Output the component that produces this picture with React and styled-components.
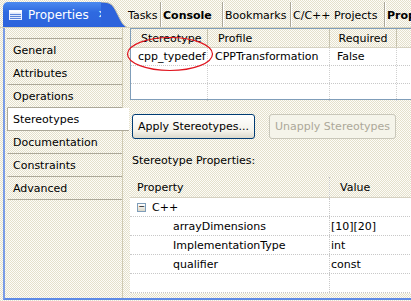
import React from "react";
import styled, { createGlobalStyle } from "styled-components";

const GlobalStyle = createGlobalStyle`
  html, body {
    margin: 0;
    padding: 0;
  }
  body {
    font-family: "DejaVu Sans", Tahoma, sans-serif;
    font-size: 11px;
    color: #000;
  }
`;

const dither = `repeating-conic-gradient(#fdfcf8 0 25%, #e4e0cb 0 50%) 0 0 / 2px 2px`;

const categories = [
  "General",
  "Attributes",
  "Operations",
  "Stereotypes",
  "Documentation",
  "Constraints",
  "Advanced",
];

const otherTabs = [
  { label: "Tasks", width: 35 },
  { label: "Console", width: 62, bold: true },
  { label: "Bookmarks", width: 68 },
  { label: "C/C++ Projects", width: 94 },
  { label: "Properties", width: 60, bold: true },
];

const properties = [
  { name: "arrayDimensions", value: "[10][20]" },
  { name: "ImplementationType", value: "int" },
  { name: "qualifier", value: "const" },
];

function App() {
  return (
    <>
      <GlobalStyle />
      <Screen>
        <TabBar>
          <ActiveTab>
            <TabIcon width="13" height="10" viewBox="0 0 13 10">
              <rect x="0.5" y="0.5" width="12" height="9" fill="#dfe8fb" stroke="#eef3ff" />
              <rect x="0.5" y="0.5" width="12" height="2" fill="#ffffff" />
              <line x1="1" y1="4.5" x2="12" y2="4.5" stroke="#5b84d8" />
              <line x1="1" y1="6.5" x2="12" y2="6.5" stroke="#5b84d8" />
              <line x1="1" y1="8.5" x2="12" y2="8.5" stroke="#5b84d8" />
            </TabIcon>
            <ActiveLabel>Properties</ActiveLabel>
            <CloseMark>✕</CloseMark>
          </ActiveTab>
          <TabCurve width="26" height="25" viewBox="0 0 26 25">
            <path d="M0 0 C10 0 12 3 16 11 C20 19 22 24 26 25 L0 25 Z" fill="#2d63dc" />
            <path d="M0 0 C10 0 12 3 16 11 C20 19 22 24 26 25" fill="none" stroke="#c9c4ab" />
          </TabCurve>
          <Tabs>
            {otherTabs.map((t) => (
              <Tab key={t.label} $width={t.width} $bold={t.bold}>
                {t.label}
              </Tab>
            ))}
          </Tabs>
        </TabBar>

        <Body>
          <Sidebar>
            <CategoryList>
              {categories.map((c) => (
                <Category key={c} $selected={c === "Stereotypes"}>
                  {c}
                </Category>
              ))}
            </CategoryList>
          </Sidebar>

          <Main>
            <StereoTable>
              <StereoHead>
                <HeadCell $width={77}>Stereotype</HeadCell>
                <HeadCell $width={122}>Profile</HeadCell>
                <HeadCell $width={67} $center>Required</HeadCell>
                <HeadCell $width={40} />
              </StereoHead>
              <StereoRow>
                <Cell $width={77}>cpp_typedef</Cell>
                <Cell $width={122}>CPPTransformation</Cell>
                <Cell $width={67}>False</Cell>
              </StereoRow>
              <StereoRow>
                <Cell $width={77} />
                <Cell $width={122} />
                <Cell $width={67} />
              </StereoRow>
              <StereoRow $last>
                <Cell $width={77} />
                <Cell $width={122} />
                <Cell $width={67} />
              </StereoRow>
              <Ellipse width="88" height="36" viewBox="0 0 88 36">
                <ellipse cx="44" cy="18" rx="42.5" ry="16.5" fill="none" stroke="#e0141e" strokeWidth="1.2" />
              </Ellipse>
            </StereoTable>

            <ButtonRow>
              <Button $width={123}>Apply Stereotypes...</Button>
              <Button $width={127} disabled>Unapply Stereotypes</Button>
            </ButtonRow>

            <SectionLabel>Stereotype Properties:</SectionLabel>

            <PropTable>
              <PropHead>
                <PropName>Property</PropName>
                <PropValue $head>Value</PropValue>
              </PropHead>
              <PropRow>
                <PropName>
                  <Toggle>−</Toggle>
                  C++
                </PropName>
                <PropValue />
              </PropRow>
              {properties.map((p) => (
                <PropRow key={p.name}>
                  <PropName $indent>{p.name}</PropName>
                  <PropValue>{p.value}</PropValue>
                </PropRow>
              ))}
              <PropRow>
                <PropName />
                <PropValue />
              </PropRow>
            </PropTable>
          </Main>
        </Body>
      </Screen>
    </>
  );
}

const Screen = styled.div`
  width: 411px;
  height: 301px;
  overflow: hidden;
  background: ${dither};
  display: flex;
  flex-direction: column;
`;

const TabBar = styled.div`
  height: 28px;
  display: flex;
  align-items: flex-end;
  border-bottom: 1px solid #d6d2bd;
  box-sizing: border-box;
`;

const ActiveTab = styled.div`
  margin-left: 3px;
  width: 98px;
  height: 25px;
  box-sizing: border-box;
  border-radius: 5px 0 0 0;
  background: linear-gradient(#4c8bf0 0%, #2f6ae0 40%, #2d63dc 100%);
  display: flex;
  align-items: center;
  padding-left: 6px;
  color: #fff;
`;

const TabIcon = styled.svg`
  flex: none;
  margin-right: 6px;
`;

const ActiveLabel = styled.span`
  font-size: 12px;
`;

const CloseMark = styled.span`
  margin-left: 9px;
  font-weight: bold;
  font-size: 11px;
`;

const TabCurve = styled.svg`
  flex: none;
  display: block;
`;

const Tabs = styled.div`
  display: flex;
  height: 25px;
  margin-left: -1px;
`;

const Tab = styled.div`
  width: ${(p) => p.$width}px;
  flex: none;
  display: flex;
  align-items: center;
  padding: 2px 0 0 2px;
  box-sizing: border-box;
  font-weight: ${(p) => (p.$bold ? "bold" : "normal")};
  border-right: 1px solid #aca899;
  box-shadow: 1px 0 0 #fff;
  white-space: nowrap;
`;

const Body = styled.div`
  flex: 1;
  display: flex;
  margin-left: 3px;
  border-left: 2px solid #7a9ce6;
  border-bottom: 2px solid #5e8ae6;
  margin-bottom: 1px;
  min-height: 0;
`;

const Sidebar = styled.div`
  width: 118px;
  flex: none;
  padding-top: 10px;
  padding-left: 2px;
  border-right: 1px solid #cfcab3;
  box-sizing: border-box;
`;

const CategoryList = styled.div`
  display: flex;
  flex-direction: column;
  border-top: 1px solid #aca899;
`;

const Category = styled.div`
  height: 23px;
  box-sizing: border-box;
  display: flex;
  align-items: center;
  padding-left: 5px;
  border-bottom: 1px solid #aca899;
  background: ${(p) => (p.$selected ? "#fff" : "transparent")};
  border-left: 1px solid ${(p) => (p.$selected ? "#aca899" : "transparent")};
  margin-right: ${(p) => (p.$selected ? "-7px" : "0")};
  position: relative;
  z-index: ${(p) => (p.$selected ? 1 : 0)};
`;

const Main = styled.div`
  flex: 1;
  padding-left: 7px;
  display: flex;
  flex-direction: column;
  min-width: 0;
`;

const StereoTable = styled.div`
  position: relative;
  width: 320px;
  height: 72px;
  border: 1px solid #7f9db9;
  border-right: none;
  box-sizing: border-box;
  background: #fff;
`;

const StereoHead = styled.div`
  display: flex;
  height: 18px;
  background: ${dither};
  border-bottom: 1px solid #d6d2c2;
`;

const HeadCell = styled.div`
  width: ${(p) => p.$width}px;
  flex: none;
  box-sizing: border-box;
  display: flex;
  align-items: center;
  justify-content: ${(p) => (p.$center ? "center" : "flex-start")};
  padding-left: ${(p) => (p.$center ? "0" : "10px")};
  border-right: 1px solid #c7c3ae;
`;

const StereoRow = styled.div`
  display: flex;
  height: 17px;
  border-bottom: 1px dotted ${(p) => (p.$last ? "transparent" : "#c8c8c8")};
`;

const Cell = styled.div`
  width: ${(p) => p.$width}px;
  flex: none;
  box-sizing: border-box;
  display: flex;
  align-items: center;
  padding-left: 7px;
  border-right: 1px dotted #d0d0d0;
  white-space: nowrap;
`;

const Ellipse = styled.svg`
  position: absolute;
  left: -5px;
  top: 7px;
  pointer-events: none;
`;

const ButtonRow = styled.div`
  display: flex;
  gap: 14px;
  margin-top: 14px;
  padding-left: 2px;
`;

const Button = styled.button`
  width: ${(p) => p.$width}px;
  height: 25px;
  padding: 0;
  font-family: inherit;
  font-size: 11px;
  border-radius: 3px;
  border: 1px solid ${(p) => (p.disabled ? "#c9c7ba" : "#003c74")};
  background: ${(p) =>
    p.disabled ? "#f5f4ea" : "linear-gradient(#ffffff, #f3f2ea 70%, #dcd9cc)"};
  color: ${(p) => (p.disabled ? "#aca899" : "#000")};
  white-space: nowrap;
`;

const SectionLabel = styled.div`
  margin-top: 15px;
  padding-left: 2px;
  height: 14px;
`;

const PropTable = styled.div`
  margin-top: 9px;
  width: 320px;
  display: flex;
  flex-direction: column;
`;

const PropHead = styled.div`
  display: flex;
  height: 20px;
  background: ${dither};
  border-bottom: 1px solid #d6d2c2;
`;

const PropRow = styled.div`
  display: flex;
  height: 19px;
  background: #fff;
  border-bottom: 1px dotted #c8c8c8;
  box-sizing: border-box;
`;

const PropName = styled.div`
  width: 200px;
  flex: none;
  box-sizing: border-box;
  display: flex;
  align-items: center;
  padding-left: ${(p) => (p.$indent ? "43px" : "7px")};
  border-right: 1px dotted #c8c8c8;
`;

const PropValue = styled.div`
  flex: 1;
  display: flex;
  align-items: center;
  padding-left: ${(p) => (p.$head ? "10px" : "1px")};
`;

const Toggle = styled.span`
  width: 7px;
  height: 7px;
  border: 1px solid #7f9db9;
  background: linear-gradient(#fff, #d9d6c8);
  display: inline-flex;
  align-items: center;
  justify-content: center;
  font-size: 8px;
  line-height: 1;
  margin-right: 6px;
`;

export default App;
